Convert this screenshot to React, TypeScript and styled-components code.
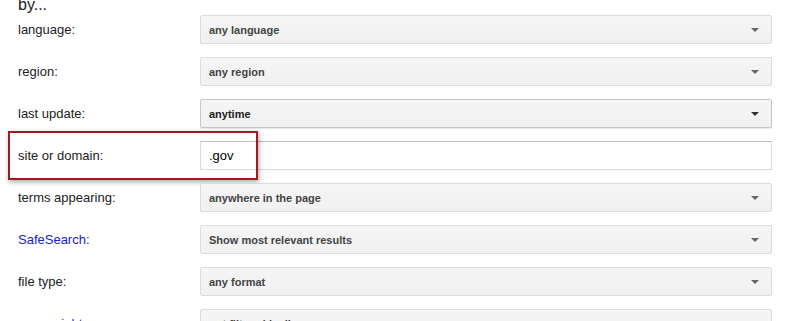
import React from "react";
import styled, { createGlobalStyle } from "styled-components";

const GlobalStyle = createGlobalStyle`
  html, body {
    margin: 0;
    padding: 0;
    background: #fff;
    overflow: hidden;
  }
  body {
    font-family: "Liberation Sans", Arial, sans-serif;
  }
`;

const Page = styled.div`
  padding-left: 18px;
  width: 754px;
`;

const Heading = styled.div`
  font-size: 16px;
  line-height: 16px;
  color: #222;
  margin-top: -3px;
  height: 18px;
`;

const Rows = styled.div`
  display: flex;
  flex-direction: column;
  gap: 13px;
`;

const Row = styled.div`
  position: relative;
  display: flex;
  align-items: center;
  height: 29px;
`;

const Label = styled.div<{ $link?: boolean }>`
  width: 182px;
  flex: none;
  font-size: 13px;
  color: ${(p) => (p.$link ? "#1a22c8" : "#222")};
`;

const Colon = styled.span`
  color: #222;
`;

const Select = styled.div<{ $hover?: boolean }>`
  flex: 1;
  height: 29px;
  box-sizing: border-box;
  display: flex;
  align-items: center;
  justify-content: space-between;
  padding: 0 6px 0 8px;
  border: 1px solid ${(p) => (p.$hover ? "#c6c6c6" : "#dcdcdc")};
  border-radius: 2px;
  background: linear-gradient(#f5f5f5, #f1f1f1);
  box-shadow: ${(p) => (p.$hover ? "0 1px 1px rgba(0,0,0,0.1)" : "none")};
  font-size: 11px;
  font-weight: bold;
  color: ${(p) => (p.$hover ? "#222" : "#444")};
`;

const Arrow = styled.span<{ $dark?: boolean }>`
  width: 0;
  height: 0;
  margin-right: 6px;
  border-left: 4px solid transparent;
  border-right: 4px solid transparent;
  border-top: 4px solid ${(p) => (p.$dark ? "#333" : "#666")};
`;

const TextBox = styled.div`
  flex: 1;
  height: 29px;
  box-sizing: border-box;
  display: flex;
  align-items: center;
  padding-left: 8px;
  border: 1px solid #d9d9d9;
  border-top-color: #c0c0c0;
  background: #fff;
  font-size: 13px;
  color: #000;
`;

const Highlight = styled.div`
  position: absolute;
  left: -10px;
  top: -10px;
  width: 250px;
  height: 49px;
  box-sizing: border-box;
  border: 2px solid #9c1c22;
  box-shadow: 1px 2px 5px rgba(0, 0, 0, 0.35);
  pointer-events: none;
`;

type Option = {
  label: string;
  value: string;
  link?: boolean;
  hover?: boolean;
  input?: boolean;
  highlight?: boolean;
};

const options: Option[] = [
  { label: "language", value: "any language" },
  { label: "region", value: "any region" },
  { label: "last update", value: "anytime", hover: true },
  { label: "site or domain", value: ".gov", input: true, highlight: true },
  { label: "terms appearing", value: "anywhere in the page" },
  { label: "SafeSearch", value: "Show most relevant results", link: true },
  { label: "file type", value: "any format" },
  { label: "usage rights", value: "not filtered by license", link: true },
];

export default function App() {
  return (
    <>
      <GlobalStyle />
      <Page>
        <Heading>by...</Heading>
        <Rows>
          {options.map((o) => (
            <Row key={o.label}>
              <Label $link={o.link}>
                {o.label}
                <Colon>:</Colon>
              </Label>
              {o.input ? (
                <TextBox>{o.value}</TextBox>
              ) : (
                <Select $hover={o.hover}>
                  {o.value}
                  <Arrow $dark={o.hover} />
                </Select>
              )}
              {o.highlight && <Highlight />}
            </Row>
          ))}
        </Rows>
      </Page>
    </>
  );
}
